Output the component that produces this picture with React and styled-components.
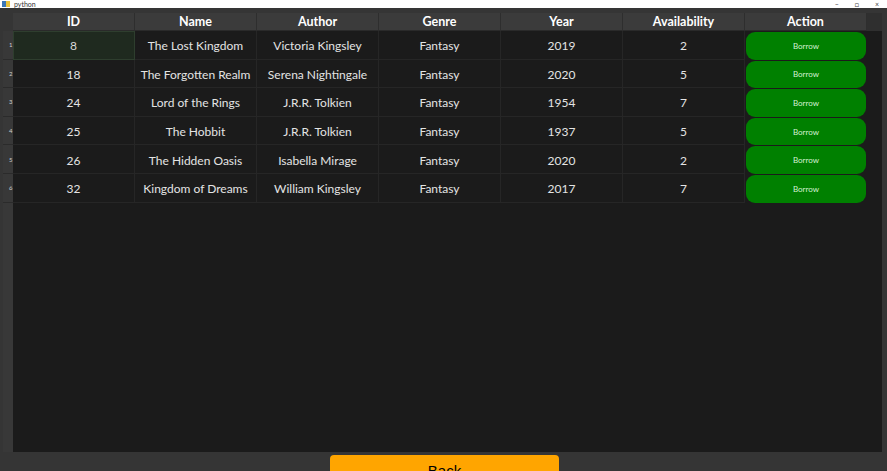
import React from 'react';
import styled, { createGlobalStyle } from 'styled-components';

const GlobalStyle = createGlobalStyle`
    html, body {
        margin: 0;
        padding: 0;
        height: 471px;
        overflow: hidden;
        background: #353535;
    }
    * { box-sizing: border-box; }
`;

const Window = styled.div`
    width: 887px;
    height: 471px;
    display: flex;
    flex-direction: column;
    font-family: Lato, "Open Sans", sans-serif;
    overflow: hidden;
`;

const TitleBar = styled.div`
    height: 8px;
    flex: none;
    background: #ffffff;
    display: flex;
    align-items: center;
    justify-content: space-between;
    overflow: hidden;
    padding: 0 8px 0 2px;
    .caption {
        display: flex;
        align-items: center;
        gap: 4px;
        font-size: 7px;
        color: #333;
        line-height: 8px;
    }
    .logo {
        width: 8px;
        height: 6px;
        background: linear-gradient(90deg, #3b77b8 50%, #e7c23e 50%);
    }
    .controls {
        display: flex;
        gap: 16px;
        font-size: 7px;
        color: #444;
        line-height: 8px;
    }
`;

const Body = styled.div`
    flex: none;
    padding: 5px 5px 0 3px;
`;

const Table = styled.div`
    height: 439px;
    background: #1b1b1b;
    display: grid;
    grid-template-columns: 10px repeat(7, 122px) 1fr;
    grid-template-rows: 18px repeat(6, 28.6px) 1fr;
`;

const Corner = styled.div`
    background: #353535;
`;

const HeadCell = styled.div`
    background: #3b3b3b;
    color: #ffffff;
    font-weight: 700;
    font-size: 12.5px;
    display: flex;
    align-items: center;
    justify-content: center;
    border-right: 1px solid #2e2e2e;
    border-bottom: 1px solid #2a2a2a;
`;

const HeadFill = styled.div`
    background: #2f2f2f;
`;

const RowHead = styled.div`
    background: #383838;
    color: #cfcfcf;
    font-size: 6px;
    display: flex;
    align-items: center;
    padding-left: 6px;
    border-bottom: 1px solid #2b2b2b;
`;

const Cell = styled.div`
    color: ${p => (p.$selected ? '#d9d9d9' : '#e4e4e4')};
    background: ${p => (p.$selected ? '#1f2a1f' : 'transparent')};
    outline: ${p => (p.$selected ? '1px solid #2e3e2e' : 'none')};
    outline-offset: -1px;
    font-size: 12px;
    padding-top: 2px;
    display: flex;
    align-items: center;
    justify-content: center;
    border-right: 1px solid #262626;
    border-bottom: 1px solid #262626;
`;

const ActionCell = styled.div`
    padding: 1px 1px 0 1px;
    display: flex;
`;

const BorrowButton = styled.button`
    flex: 1;
    border: none;
    border-radius: 9px;
    background: #008000;
    color: #d4f0d4;
    font-family: Lato, "Open Sans", sans-serif;
    font-size: 8px;
    padding: 0;
    cursor: pointer;
`;

const RowFill = styled.div`
    background: #1b1b1b;
`;

const EmptyArea = styled.div`
    grid-column: 1 / -1;
    display: grid;
    grid-template-columns: 10px 1fr;
    .side { background: #383838; }
`;

const Footer = styled.div`
    flex: none;
    display: flex;
    justify-content: center;
    padding: 3px 0 0 2px;
`;

const BackButton = styled.button`
    width: 229px;
    height: 30px;
    border: none;
    border-radius: 4px;
    background: #ffa500;
    color: #000;
    font-family: "Liberation Sans", Arial, sans-serif;
    font-size: 15px;
    padding: 0;
    cursor: pointer;
`;

const headers = ['ID', 'Name', 'Author', 'Genre', 'Year', 'Availability', 'Action'];

const books = [
    { id: 8, name: 'The Lost Kingdom', author: 'Victoria Kingsley', genre: 'Fantasy', year: 2019, avail: 2 },
    { id: 18, name: 'The Forgotten Realm', author: 'Serena Nightingale', genre: 'Fantasy', year: 2020, avail: 5 },
    { id: 24, name: 'Lord of the Rings', author: 'J.R.R. Tolkien', genre: 'Fantasy', year: 1954, avail: 7 },
    { id: 25, name: 'The Hobbit', author: 'J.R.R. Tolkien', genre: 'Fantasy', year: 1937, avail: 5 },
    { id: 26, name: 'The Hidden Oasis', author: 'Isabella Mirage', genre: 'Fantasy', year: 2020, avail: 2 },
    { id: 32, name: 'Kingdom of Dreams', author: 'William Kingsley', genre: 'Fantasy', year: 2017, avail: 7 },
];

const App = () => (
    <Window>
        <GlobalStyle />
        <TitleBar>
            <div className="caption"><span className="logo" />python</div>
            <div className="controls"><span>–</span><span>□</span><span>×</span></div>
        </TitleBar>
        <Body>
            <Table>
                <Corner />
                {headers.map(h => <HeadCell key={h}>{h}</HeadCell>)}
                <HeadFill />
                {books.map((b, i) => (
                    <React.Fragment key={b.id}>
                        <RowHead>{i + 1}</RowHead>
                        <Cell $selected={i === 0}>{b.id}</Cell>
                        <Cell>{b.name}</Cell>
                        <Cell>{b.author}</Cell>
                        <Cell>{b.genre}</Cell>
                        <Cell>{b.year}</Cell>
                        <Cell>{b.avail}</Cell>
                        <ActionCell><BorrowButton>Borrow</BorrowButton></ActionCell>
                        <RowFill />
                    </React.Fragment>
                ))}
                <EmptyArea><div className="side" /><div /></EmptyArea>
            </Table>
        </Body>
        <Footer>
            <BackButton>Back</BackButton>
        </Footer>
    </Window>
);

export default App;
